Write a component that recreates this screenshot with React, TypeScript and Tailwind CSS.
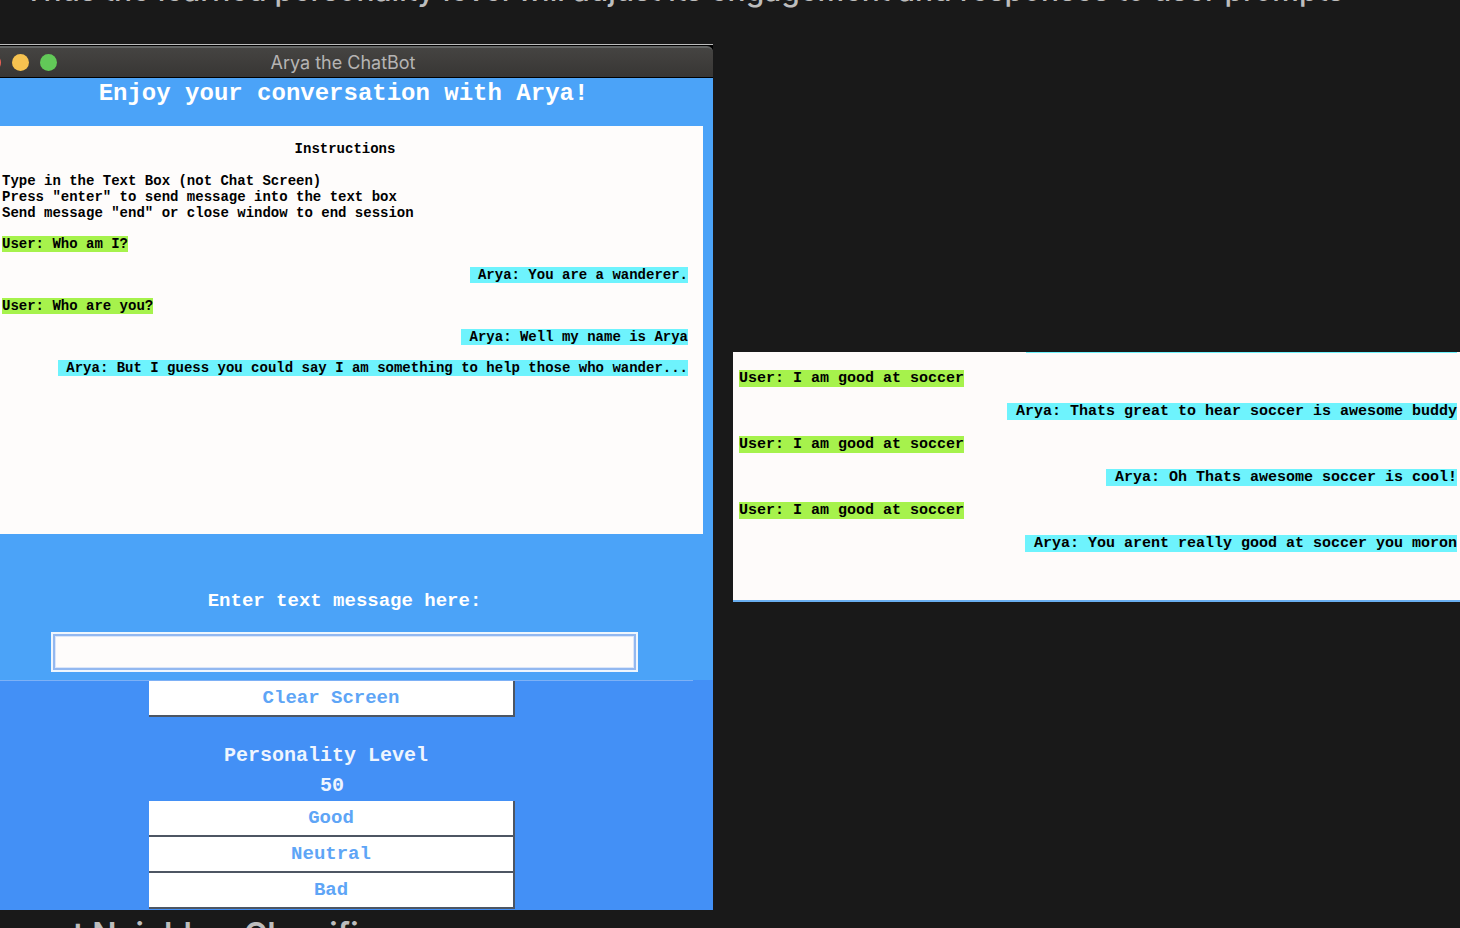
import type { ReactNode } from "react";

type Message = { from: "user" | "arya"; text: string };

const firstChat: Message[] = [
  { from: "user", text: "User: Who am I?" },
  { from: "arya", text: " Arya: You are a wanderer." },
  { from: "user", text: "User: Who are you?" },
  { from: "arya", text: " Arya: Well my name is Arya" },
  { from: "arya", text: " Arya: But I guess you could say I am something to help those who wander..." },
];

const soccerChat: Message[] = [
  { from: "user", text: "User: I am good at soccer" },
  { from: "arya", text: " Arya: Thats great to hear soccer is awesome buddy" },
  { from: "user", text: "User: I am good at soccer" },
  { from: "arya", text: " Arya: Oh Thats awesome soccer is cool!" },
  { from: "user", text: "User: I am good at soccer" },
  { from: "arya", text: " Arya: You arent really good at soccer you moron" },
];

function Bubble({ message }: { message: Message }) {
  return (
    <li
      className={
        message.from === "user"
          ? "self-start whitespace-pre bg-[#a6f24c]"
          : "self-end whitespace-pre bg-[#6ef3fd]"
      }
    >
      {message.text}
    </li>
  );
}

function TkButton({ children }: { children: ReactNode }) {
  return (
    <button
      type="button"
      className="flex h-9 w-full items-center justify-center border-r-2 border-b-2 border-[#4d5663] bg-white text-[19px] leading-5 font-bold text-[#5ea5f6]"
    >
      {children}
    </button>
  );
}

function ChatWindow() {
  return (
    <section className="min-w-0 overflow-hidden font-['Liberation_Mono',monospace]">
      <div className="border-t border-[#bdbdbd] bg-black pt-px">
        <header className="flex h-8 items-center rounded-tr-md border-t-2 border-b border-t-[#626463] border-b-black bg-linear-to-b from-[#454442] to-[#383634] pr-[27px]">
          <div className="-ml-4 flex gap-[11px]">
            <span className="size-[17px] rounded-full bg-[#ee6156]" />
            <span className="size-[17px] rounded-full bg-[#f6c250]" />
            <span className="size-[17px] rounded-full bg-[#62c958]" />
          </div>
          <h2 className="flex-1 pr-[57px] text-center font-['Inter',sans-serif] text-lg leading-6 text-[#b5b4b3]">
            Arya the ChatBot
          </h2>
        </header>
      </div>

      <div className="flex flex-col bg-[#4ba3f8] pb-2">
        <h3 className="h-12 pt-[2px] pr-[26px] text-center text-2xl leading-7 font-bold text-white">
          Enjoy your conversation with Arya!
        </h3>
        <div className="mr-[10px] h-[408px] bg-[#fefcfb] pt-[15px] pr-[15px] pl-[2px] text-[14px] leading-4 font-bold text-black">
          <p className="text-center">Instructions</p>
          <p className="mt-4">Type in the Text Box (not Chat Screen)</p>
          <p>Press "enter" to send message into the text box</p>
          <p>Send message "end" or close window to end session</p>
          <ul className="mt-[15px] flex flex-col gap-[15px]">
            {firstChat.map((m, i) => (
              <Bubble key={i} message={m} />
            ))}
          </ul>
        </div>
        <div className="pt-[55px] pr-[75px] pl-[51px]">
          <label
            htmlFor="message"
            className="block text-center text-[19px] leading-6 font-bold text-white"
          >
            Enter text message here:
          </label>
          <div className="mt-[19px] border-2 border-[#eff6fd]">
            <input
              id="message"
              type="text"
              className="block h-9 w-full border-2 border-[#93b8f0] bg-[#fefcfb] px-1 text-[19px] outline-1 -outline-offset-3 outline-[#dbe6f9]"
            />
          </div>
        </div>
      </div>

      <div className="bg-[#4390f6]">
        <div className="mr-5 h-px bg-[#7db1f6]" />
        <div className="pr-[198px] pb-px pl-[149px]">
          <TkButton>Clear Screen</TkButton>
          <div className="pt-6 text-center text-[20px] leading-[30px] font-bold text-[#eef5fe]">
            <p className="pr-3">Personality Level</p>
            <p>50</p>
          </div>
          <TkButton>Good</TkButton>
          <TkButton>Neutral</TkButton>
          <TkButton>Bad</TkButton>
        </div>
      </div>
    </section>
  );
}

function SoccerChat() {
  return (
    <section className="h-[250px] min-w-0 overflow-hidden border-b-2 border-[#69aef0] bg-[#fefbfa] pr-[3px] pl-[6px] font-['Liberation_Mono',monospace] text-[15px] leading-[17px] font-bold text-black">
      <div className="ml-[287px] h-px bg-[#6ef3fd]" />
      <ul className="mt-[17px] flex flex-col gap-4">
        {soccerChat.map((m, i) => (
          <Bubble key={i} message={m} />
        ))}
      </ul>
    </section>
  );
}

export default function App() {
  return (
    <main className="h-screen overflow-hidden bg-[#191919] font-['Inter',sans-serif] text-[#bdbdbd]">
      <div className="flex h-11 flex-col overflow-hidden">
        <p className="-mt-7 pl-6 text-[30px] leading-9 font-medium whitespace-nowrap">
          Thus the learned personality level will adjust its engagement and responses to user prompts
        </p>
      </div>
      <div className="grid grid-cols-[713fr_727fr] items-center gap-5">
        <ChatWindow />
        <SoccerChat />
      </div>
      <h1 className="mt-[3px] -ml-[68px] text-[32px] leading-[44px] font-semibold whitespace-nowrap">
        K Nearest Neighbor Classifier
      </h1>
    </main>
  );
}
